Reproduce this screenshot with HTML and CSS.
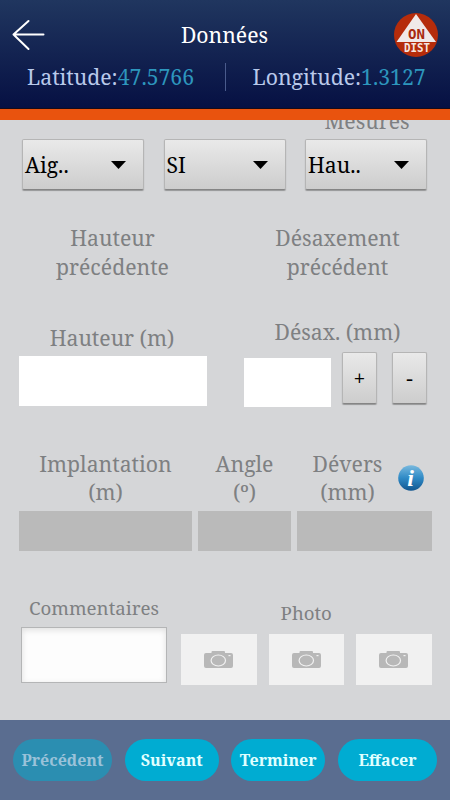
FILE: index.html
```html
<!DOCTYPE html>
<html lang="fr">
<head>
  <meta charset="UTF-8">
  <meta name="viewport" content="width=device-width, initial-scale=1.0">
  <title>Données</title>
  <link rel="stylesheet" href="styles.css">
</head>
<body>
  <!-- Header -->
  <header class="header">
    <div class="title-row">
      <svg class="back" viewBox="0 0 34 32" width="34" height="32">
        <path d="M17.500 2 L2.500 15.500 L17.500 30 M2.500 15.500 H32.500" fill="none" stroke="#fff" stroke-width="2" stroke-linecap="round" stroke-linejoin="round"/>
      </svg>
      <h1 class="title">Données</h1>
      <svg class="logo" viewBox="0 0 44 44" width="44" height="44">
        <circle cx="22" cy="22" r="22" fill="#b52c0b"/>
        <path d="M22 1 L42 29 H2.500 Z" fill="#f0e9e8"/>
        <text class="logo-text" x="22.500" y="25.500" textLength="17" lengthAdjust="spacingAndGlyphs" font-size="13.500" fill="#a92a0e">ON</text>
        <text class="logo-text" x="23" y="39" textLength="26" lengthAdjust="spacingAndGlyphs" font-size="12" fill="#f6e4df">DIST</text>
      </svg>
    </div>
    <div class="coords">
      <div class="coord latitude">Latitude:<span>47.5766</span></div>
      <div class="coord longitude">Longitude:<span>1.3127</span></div>
    </div>
  </header>

  <!-- Form -->
  <main class="content">
    <div class="mesures">Mesures</div>
    <div class="selects">
      <button class="select">Aig..<svg viewBox="0 0 15 8" width="15" height="8"><path d="M0 0H15L7.500 8Z"/></svg></button>
      <button class="select">SI<svg viewBox="0 0 15 8" width="15" height="8"><path d="M0 0H15L7.500 8Z"/></svg></button>
      <button class="select">Hau..<svg viewBox="0 0 15 8" width="15" height="8"><path d="M0 0H15L7.500 8Z"/></svg></button>
    </div>

    <div class="previous">
      <div>Hauteur<br>précédente</div>
      <div>Désaxement<br>précédent</div>
    </div>

    <div class="inputs">
      <div class="field-height">
        <label class="label" for="hauteur">Hauteur (m)</label>
        <input id="hauteur" type="text">
      </div>
      <div class="field-offset">
        <label class="label" for="desax">Désax. (mm)</label>
        <div class="stepper">
          <input id="desax" type="text">
          <button class="step">+</button>
          <button class="step">-</button>
        </div>
      </div>
    </div>

    <div class="results">
      <div class="result">Implantation<br>(m)<div class="value"></div></div>
      <div class="result">Angle<br>(º)<div class="value"></div></div>
      <div class="result devers">
        <div class="devers-head">
          <div class="devers-label">Dévers<br>(mm)</div>
          <svg class="info" viewBox="0 0 26 26" width="26" height="26">
            <defs>
              <linearGradient id="blue" x1="0" y1="0" x2="0" y2="1">
                <stop offset="0" stop-color="#79b9de"/>
                <stop offset="0.5" stop-color="#2f8ac6"/>
                <stop offset="1" stop-color="#12568f"/>
              </linearGradient>
            </defs>
            <circle cx="13" cy="13" r="12.800" fill="url(#blue)"/>
            <text class="info-text" x="12.500" y="20.500">i</text>
          </svg>
        </div>
        <div class="value"></div>
      </div>
    </div>

    <div class="extras">
      <div class="comments">
        <label for="comment">Commentaires</label>
        <textarea id="comment"></textarea>
      </div>
      <div class="photos">
        <div class="photo-label">Photo</div>
        <div class="photo-list">
          <button class="photo"><svg viewBox="0 0 29 17" width="29" height="17"><path d="M2 2H7.500V1Q7.500 0 8.500 0H20Q21 0 21 1V2H27Q29 2 29 4V15Q29 17 27 17H2Q0 17 0 15V4Q0 2 2 2Z" fill="#b8b8b8"/><ellipse cx="14.300" cy="9.500" rx="7.200" ry="5.500" fill="none" stroke="#f1f1f1" stroke-width="1.200"/><rect x="24.500" y="4" width="2" height="1.200" fill="#f1f1f1"/></svg></button>
          <button class="photo"><svg viewBox="0 0 29 17" width="29" height="17"><path d="M2 2H7.500V1Q7.500 0 8.500 0H20Q21 0 21 1V2H27Q29 2 29 4V15Q29 17 27 17H2Q0 17 0 15V4Q0 2 2 2Z" fill="#b8b8b8"/><ellipse cx="14.300" cy="9.500" rx="7.200" ry="5.500" fill="none" stroke="#f1f1f1" stroke-width="1.200"/><rect x="24.500" y="4" width="2" height="1.200" fill="#f1f1f1"/></svg></button>
          <button class="photo"><svg viewBox="0 0 29 17" width="29" height="17"><path d="M2 2H7.500V1Q7.500 0 8.500 0H20Q21 0 21 1V2H27Q29 2 29 4V15Q29 17 27 17H2Q0 17 0 15V4Q0 2 2 2Z" fill="#b8b8b8"/><ellipse cx="14.300" cy="9.500" rx="7.200" ry="5.500" fill="none" stroke="#f1f1f1" stroke-width="1.200"/><rect x="24.500" y="4" width="2" height="1.200" fill="#f1f1f1"/></svg></button>
        </div>
      </div>
    </div>
  </main>

  <!-- Footer -->
  <footer class="footer">
    <button class="nav disabled" disabled>Précédent</button>
    <button class="nav">Suivant</button>
    <button class="nav">Terminer</button>
    <button class="nav">Effacer</button>
  </footer>
</body>
</html>
```
FILE: styles.css
```css
/* General Styles */
* {
  box-sizing: border-box;
}

body {
  margin: 0;
  width: 450px;
  height: 800px;
  overflow: hidden;
  display: flex;
  flex-direction: column;
  font-family: "Noto Serif", "Droid Serif", "DejaVu Serif Condensed", "DejaVu Serif", serif;
  font-size: 21.2px;
  line-height: 28px;
  color: #7e8082;
  background-color: #d5d6d8;
}

button,
input,
textarea {
  font: inherit;
  padding: 0;
  border: none;
  border-radius: 0;
  display: block;
}

svg {
  display: block;
}

/* Header */
.header {
  height: 120px;
  flex: none;
  background: linear-gradient(#20365f 0, #061043 108px, #160b18 108px, #160b18 109px, #e9530e 109px);
}

.title-row {
  display: grid;
  grid-template-columns: 100px 1fr 100px;
  align-items: center;
  height: 63px;
  padding: 6px 12px 0 11px;
}

.title {
  margin: 0;
  font-size: 21.2px;
  font-weight: normal;
  color: #fff;
  text-align: center;
}

.logo {
  justify-self: end;
}

.logo-text {
  font-family: "DejaVu Sans Mono", monospace;
  font-weight: bold;
  text-anchor: middle;
}

.coords {
  display: flex;
  height: 28px;
  color: #b9c9ea;
}

.coord {
  flex: 1;
  white-space: nowrap;
}

.latitude {
  padding-left: 27px;
  border-right: 1px solid #4a5b8c;
}

.longitude {
  padding-left: 27px;
}

.coord span {
  color: #2d96bd;
}

/* Form */
.content {
  flex: 1;
  overflow: hidden;
}

.mesures {
  height: 28px;
  width: 122px;
  margin: -13px 0 4px 306px;
  text-align: center;
}

.selects {
  display: flex;
  gap: 19.5px;
  padding-left: 22px;
}

.select,
.step {
  color: #000;
  background: linear-gradient(#e9e9e9, #cdcdcd);
  border: 1px solid #b5b5b5;
  border-bottom-color: #858585;
  border-radius: 2px;
  box-shadow: 0 1px 1px rgba(0, 0, 0, 0.3);
}

.select {
  display: flex;
  justify-content: space-between;
  align-items: center;
  width: 122px;
  height: 51px;
  padding: 0 17px 0 2px;
}

.previous {
  display: flex;
  margin-top: 33px;
  text-align: center;
  line-height: 29px;
}

.previous div {
  width: 225px;
}

.inputs {
  display: flex;
  margin-top: 37px;
  height: 90px;
}

.field-height {
  width: 188px;
  margin: 6px 37px 0 19px;
}

.label {
  display: block;
  text-align: center;
}

.field-height .label {
  padding-right: 2px;
}

.field-height input {
  width: 188px;
  height: 50px;
  margin-top: 4px;
}

.field-offset {
  width: 187px;
}

.stepper {
  display: flex;
  align-items: flex-start;
  margin-top: 6px;
}

.stepper input {
  width: 87px;
  height: 49px;
  margin: 6px 11px 0 0;
}

.step {
  flex: none;
  width: 35px;
  height: 52px;
  margin-right: 15px;
}

.step:last-child {
  margin-right: 0;
}

.results {
  display: flex;
  gap: 6px;
  margin: 42px 18px 0 19px;
  text-align: center;
}

.result:nth-child(1) {
  width: 173px;
}

.result:nth-child(2) {
  width: 93px;
}

.devers {
  width: 135px;
}

.devers-head {
  display: flex;
  align-items: center;
}

.devers-label {
  width: 101px;
}

.info-text {
  font: italic bold 24px "Liberation Serif", serif;
  fill: #fff;
  text-anchor: middle;
}

.value {
  height: 40px;
  margin-top: 5px;
  background-color: #bababa;
}

/* Comment and photos */
.extras {
  display: flex;
  margin: 43px 18px 0 21px;
  font-size: 18.7px;
}

.comments {
  width: 146px;
  margin-right: 14px;
}

.comments label {
  display: block;
  text-align: center;
}

.comments textarea {
  width: 146px;
  height: 56px;
  margin-top: 5px;
  resize: none;
  background-color: #fdfdfd;
  border: 1px solid #b4b5b6;
  box-shadow: inset 0 2px 6px rgba(0, 0, 0, 0.12);
}

.photo-label {
  margin-top: 5px;
  text-align: center;
}

.photo-list {
  display: flex;
  gap: 12px;
  margin-top: 7px;
}

.photo {
  display: flex;
  justify-content: center;
  align-items: center;
  width: 75.5px;
  height: 51px;
  background-color: #f1f1f1;
}

/* Footer */
.footer {
  display: flex;
  gap: 12.4px;
  flex: none;
  height: 80px;
  padding: 19px 12.5px 0;
  background-color: #5a6d90;
}

.nav {
  width: 94px;
  height: 42px;
  border-radius: 21px;
  background-color: #00acd2;
  color: #e0ffff;
  font-size: 16px;
  font-weight: bold;
}

.nav:first-child,
.nav:last-child {
  width: 100px;
}

.nav.disabled {
  background-color: #2b8eb1;
  color: #9ac2d9;
}
```
